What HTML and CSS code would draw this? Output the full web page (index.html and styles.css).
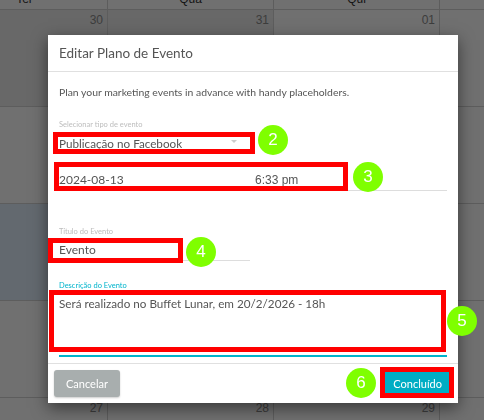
FILE: index.html
```html
<!DOCTYPE html>
<html lang="pt-BR">
<head>
<meta charset="UTF-8">
<meta name="viewport" content="width=device-width, initial-scale=1.0">
<title>Editar Plano de Evento</title>
<link rel="stylesheet" href="styles.css">
</head>
<body>
<div class="calendar">
<div class="cal-head">Ter</div>
<div class="cal-head">Qua</div>
<div class="cal-head">Qui</div>
<div class="cal-head">Sex</div>

<div class="cal-day other-month">30</div>
<div class="cal-day other-month">31</div>
<div class="cal-day">01</div>
<div class="cal-day">02</div>

<div class="cal-day">06</div>
<div class="cal-day">07</div>
<div class="cal-day">08</div>
<div class="cal-day">09</div>

<div class="cal-day selected">13</div>
<div class="cal-day">14</div>
<div class="cal-day">15</div>
<div class="cal-day">16</div>

<div class="cal-day">20</div>
<div class="cal-day">21</div>
<div class="cal-day">22</div>
<div class="cal-day">23</div>

<div class="cal-day">27</div>
<div class="cal-day">28</div>
<div class="cal-day">29</div>
<div class="cal-day">30</div>
</div>

<div class="backdrop"></div>

<div class="modal">
<div class="modal-header">Editar Plano de Evento</div>
<div class="modal-body">
<p class="intro">Plan your marketing events in advance with handy placeholders.</p>

<label class="field-label first">Selecionar tipo de evento</label>
<div class="select">Publicação no Facebook<span class="caret"></span></div>

<div class="input date-row">
<span>2024-08-13</span>
<span class="time">6:33 pm</span>
</div>

<label class="field-label title-label">Título do Evento</label>
<div class="input title-input">Evento</div>

<label class="field-label active">Descrição do Evento</label>
<div class="textarea">Será realizado no Buffet Lunar, em 20/2/2026 - 18h</div>
</div>
<div class="modal-footer">
<button class="btn btn-cancel">Cancelar</button>
<button class="btn btn-done">Concluído</button>
</div>

<!-- marcações do tutorial -->
<div class="mark mark-2"></div>
<div class="mark mark-3"></div>
<div class="mark mark-4"></div>
<div class="mark mark-5"></div>
<div class="mark mark-6"></div>
<span class="step step-2">2</span>
<span class="step step-3">3</span>
<span class="step step-4">4</span>
<span class="step step-5">5</span>
<span class="step step-6">6</span>
</div>
</body>
</html>
```

FILE: styles.css
```css
body {
    margin: 0;
    overflow: hidden;
    background: #fff;
    font-family: "Liberation Sans", Arial, sans-serif;
}

.calendar {
    display: grid;
    grid-template-columns: repeat(4, 166px);
    margin-left: -58px;
    margin-top: -12px;
}
.cal-head {
    height: 22px;
    line-height: 22px;
    box-sizing: border-box;
    border-right: 1px solid #d4d4d4;
    border-bottom: 1px solid #d4d4d4;
    text-align: center;
    font-size: 12px;
    color: #333;
}
.cal-day {
    height: 97px;
    box-sizing: border-box;
    border-right: 1px solid #d4d4d4;
    border-bottom: 1px solid #d4d4d4;
    padding: 3px 4px 0 0;
    text-align: right;
    font-size: 12px;
    line-height: 14px;
    color: #8c8c8c;
}
.cal-day.other-month {
    background: #ededed;
}
.cal-day.selected {
    background: #e1f0fd;
}

.backdrop {
    position: fixed;
    inset: 0;
    background: rgba(0, 0, 0, 0.56);
}

.modal {
    position: fixed;
    left: 48px;
    top: 35px;
    width: 410px;
    background: #fff;
    box-shadow: 0 5px 15px rgba(0, 0, 0, 0.5);
    font-family: Lato, "Liberation Sans", sans-serif;
    color: #555;
}
.modal-header {
    height: 36px;
    line-height: 36px;
    padding: 0 11px;
    border-bottom: 1px solid #e0e0e0;
    font-size: 13.5px;
    color: #555;
}
.modal-body {
    padding: 0 11px 6px;
}
.intro {
    margin: 12px 0 0;
    font-size: 10.4px;
    line-height: 16px;
    color: #555;
}
.field-label {
    display: block;
    margin-top: 20px;
    font-size: 7.5px;
    line-height: 10px;
    color: #bdbdbd;
}
.field-label.title-label {
    margin-top: 36px;
}
.field-label.active {
    color: #00b4cc;
}
.select {
    position: relative;
    width: 186px;
    height: 20px;
    margin-top: 3px;
    font-size: 11.7px;
    line-height: 20px;
    color: #555;
}
.caret {
    position: absolute;
    right: 8px;
    top: 7px;
    border-left: 3px solid transparent;
    border-right: 3px solid transparent;
    border-top: 3px solid #ccc;
}
.input {
    height: 20px;
    line-height: 20px;
    border-bottom: 1px solid #ddd;
    font-size: 12px;
    color: #555;
}
.date-row {
    display: grid;
    grid-template-columns: 196px 1fr;
    margin-top: 17px;
}
.time {
    font-family: "Liberation Sans", Arial, sans-serif;
}
.title-input {
    width: 191px;
    margin-top: 3px;
}
.textarea {
    height: 62px;
    margin-top: 2px;
    border-bottom: 2px solid #00b4cc;
    font-size: 11.7px;
    line-height: 20px;
    color: #555;
}

.modal-footer {
    display: flex;
    justify-content: space-between;
    padding: 6px;
    border-top: 1px solid #e0e0e0;
}
.btn {
    height: 27px;
    padding: 0 12px;
    border: none;
    border-radius: 3px;
    font-family: Lato, "Liberation Sans", sans-serif;
    font-size: 11px;
    color: #fff;
}
.btn-cancel {
    background: #a8aeae;
    box-shadow: 0 1px 2px rgba(0, 0, 0, 0.2);
}
.btn-done {
    padding: 0 10px;
    background: #00adc4;
}

/* marcações */
.mark {
    position: absolute;
    box-sizing: border-box;
    border: 5px solid #ff0000;
}
.mark-2 { left: 5px; top: 97px; width: 202px; height: 22px; }
.mark-3 { left: 6px; top: 127px; width: 294px; height: 29px; }
.mark-4 { left: 0; top: 203px; width: 135px; height: 25px; }
.mark-5 { left: 1px; top: 255px; width: 397px; height: 62px; }
.mark-6 { left: 332px; top: 332px; width: 74px; height: 31px; }

.step {
    position: absolute;
    width: 30px;
    height: 30px;
    border-radius: 50%;
    background: #7fff00;
    color: #fff;
    font-family: "Liberation Sans", Arial, sans-serif;
    font-size: 17px;
    line-height: 30px;
    text-align: center;
}
.step-2 { left: 210px; top: 90px; }
.step-3 { left: 305px; top: 127px; }
.step-4 { left: 138px; top: 202px; }
.step-5 { left: 399px; top: 271px; }
.step-6 { left: 298px; top: 333px; }
```
